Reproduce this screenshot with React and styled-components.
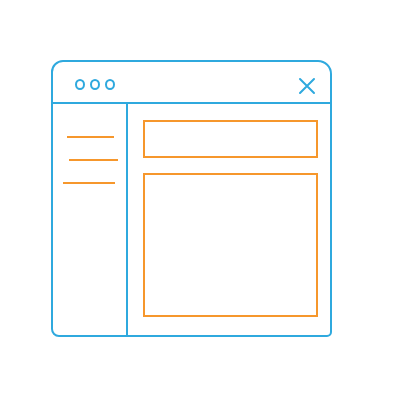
import React from "react";
import styled, { createGlobalStyle } from "styled-components";

const BLUE = "#2fa9de";
const ORANGE = "#f6972c";

const Global = createGlobalStyle`
  html, body {
    margin: 0;
    padding: 0;
    background: #ffffff;
    font-family: "Liberation Sans", Arial, sans-serif;
  }
`;

const Stage = styled.div`
  width: 400px;
  height: 400px;
  padding: 60px 0 0 51px;
  box-sizing: border-box;
`;

const Window = styled.div`
  width: 281px;
  height: 277px;
  box-sizing: border-box;
  border: 2px solid ${BLUE};
  border-radius: 12px 14px 5px 8px;
  display: flex;
  flex-direction: column;
`;

const TitleBar = styled.div`
  height: 42px;
  flex: none;
  border-bottom: 2px solid ${BLUE};
  display: flex;
  align-items: center;
  justify-content: space-between;
  padding: 0 14px 0 22px;
  box-sizing: border-box;
`;

const Dots = styled.div`
  display: flex;
  gap: 5px;
  margin-top: 4px;
`;

const Dot = styled.span`
  width: 10px;
  height: 11px;
  box-sizing: border-box;
  border: 2.5px solid ${BLUE};
  border-radius: 50%;
`;

const Close = styled.svg`
  width: 18px;
  height: 18px;
  margin-top: 8px;
`;

const Body = styled.div`
  flex: 1;
  display: flex;
`;

const Sidebar = styled.div`
  width: 75px;
  flex: none;
  border-right: 2px solid ${BLUE};
  display: flex;
  flex-direction: column;
  gap: 21px;
  padding: 32px 0 0 10px;
  box-sizing: border-box;
`;

const MenuLine = styled.div`
  height: 2px;
  width: ${(p) => p.$w}px;
  margin-left: ${(p) => p.$x}px;
  background: ${ORANGE};
`;

const Content = styled.div`
  flex: 1;
  display: flex;
  flex-direction: column;
  gap: 15px;
  padding: 16px 12px 18px 15px;
  box-sizing: border-box;
`;

const Panel = styled.div`
  border: 2px solid ${ORANGE};
  box-sizing: border-box;
  height: ${(p) => (p.$grow ? "auto" : `${p.$h}px`)};
  flex: ${(p) => (p.$grow ? 1 : "none")};
`;

export default function App() {
  return (
    <>
      <Global />
      <Stage>
        <Window>
          <TitleBar>
            <Dots>
              <Dot />
              <Dot />
              <Dot />
            </Dots>
            <Close viewBox="0 0 18 18">
              <path
                d="M2 2 L16 16 M16 2 L2 16"
                stroke={BLUE}
                strokeWidth="2"
                strokeLinecap="round"
                fill="none"
              />
            </Close>
          </TitleBar>
          <Body>
            <Sidebar>
              <MenuLine $w={47} $x={4} />
              <MenuLine $w={49} $x={6} />
              <MenuLine $w={52} $x={0} />
            </Sidebar>
            <Content>
              <Panel $h={38} />
              <Panel $grow />
            </Content>
          </Body>
        </Window>
      </Stage>
    </>
  );
}
